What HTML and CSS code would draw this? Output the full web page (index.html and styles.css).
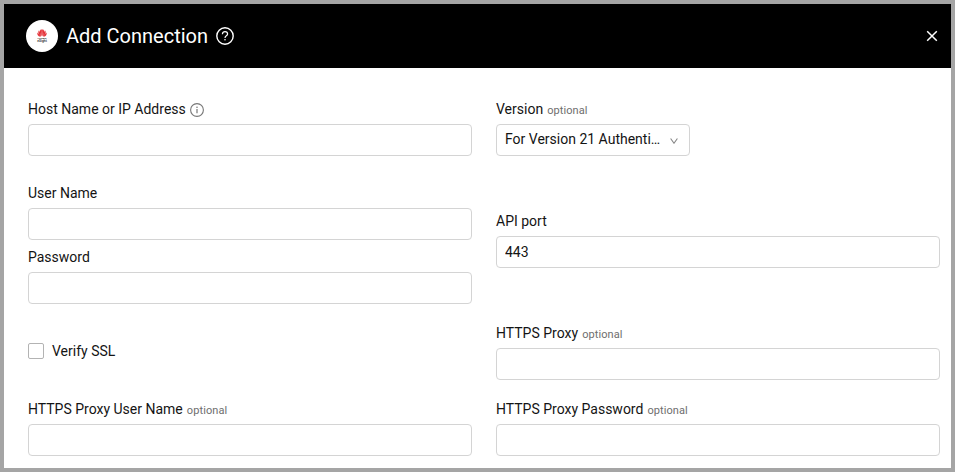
FILE: index.html
```html
<!DOCTYPE html>
<html lang="en">
<head>
<meta charset="utf-8">
<title>Add Connection</title>
<link rel="stylesheet" href="styles.css">
</head>
<body>
<main class="dialog">
  <header class="header">
    <span class="logo">
      <svg width="32" height="32" viewBox="0 0 32 32">
        <g fill="#e5333a">
          <path d="M15.7 16.2C13.6 14 13.4 10.2 15 9.6L15.9 9.5Z"/>
          <path d="M16.3 16.2C18.4 14 18.6 10.2 17 9.6L16.1 9.5Z"/>
          <path d="M15.2 16.3C12.4 15 11.6 12 13 10.3C14 12.3 14.9 14.6 15.2 16.3Z"/>
          <path d="M16.8 16.3C19.6 15 20.4 12 19 10.3C18 12.3 17.1 14.6 16.8 16.3Z"/>
          <path d="M14.8 16.6C12.2 16.9 10.9 14.8 11.4 12.6C12.8 13.8 14 15.2 14.8 16.6Z"/>
          <path d="M17.2 16.6C19.8 16.9 21.1 14.8 20.6 12.6C19.2 13.8 18 15.2 17.2 16.6Z"/>
        </g>
        <text class="logo-name" x="16" y="18.6" text-anchor="middle">HUAWEI</text>
        <text class="logo-sub" x="16" y="22.4" text-anchor="middle">eSight</text>
      </svg>
    </span>
    <h1 class="title">Add Connection</h1>
    <svg class="help" width="18" height="18" viewBox="0 0 18 18" fill="none" stroke="#fff">
      <circle cx="9" cy="9" r="8.2" stroke-width="1.4"/>
      <path d="M6.4 7.2C6.4 5.5 7.5 4.7 9 4.7S11.6 5.6 11.6 7.1C11.6 8.9 9 8.7 9 10.9" stroke-width="1.2"/>
      <circle cx="9" cy="12.8" r=".8" fill="#fff" stroke="none"/>
    </svg>
    <svg class="close" width="12" height="12" viewBox="0 0 12 12" fill="none" stroke="#fff" stroke-width="1.5">
      <path d="M1.2 1.2L10.8 10.8M10.8 1.2L1.2 10.8"/>
    </svg>
  </header>
  <form class="form">
    <div class="column">
      <div class="field gap-large">
        <label class="label" for="host">Host Name or IP Address
          <svg class="info" width="14" height="14" viewBox="0 0 14 14" fill="none" stroke="#777">
            <circle cx="7" cy="7" r="6.4" stroke-width="1.1"/>
            <path d="M7 6V10.3" stroke-width="1.2"/>
            <circle cx="7" cy="4.2" r=".8" fill="#777" stroke="none"/>
          </svg>
        </label>
        <input class="input" id="host">
      </div>
      <div class="field gap-small">
        <label class="label" for="user">User Name</label>
        <input class="input" id="user">
      </div>
      <div class="field">
        <label class="label" for="password">Password</label>
        <input class="input" id="password" type="password">
      </div>
      <label class="check"><input class="box" type="checkbox">Verify SSL</label>
      <div class="field">
        <label class="label" for="proxy-user">HTTPS Proxy User Name <span class="optional">optional</span></label>
        <input class="input" id="proxy-user">
      </div>
    </div>
    <div class="column">
      <div class="field gap-wide">
        <span class="label">Version <span class="optional">optional</span></span>
        <div class="input select">
          <span class="select-value">For Version 21 Authentication</span>
          <svg class="chevron" width="8" height="6" viewBox="0 0 8 6" fill="none" stroke="#858585" stroke-width="1.1"><path d="M.6 .5L4 5.2L7.4 .5"/></svg>
        </div>
      </div>
      <div class="field gap-wide">
        <label class="label" for="port">API port</label>
        <input class="input" id="port" value="443">
      </div>
      <div class="field gap-medium">
        <label class="label" for="proxy">HTTPS Proxy <span class="optional">optional</span></label>
        <input class="input" id="proxy">
      </div>
      <div class="field">
        <label class="label" for="proxy-password">HTTPS Proxy Password <span class="optional">optional</span></label>
        <input class="input" id="proxy-password" type="password">
      </div>
    </div>
  </form>
</main>
</body>
</html>
```
FILE: styles.css
```css
* { box-sizing: border-box; }
body {
  margin: 0;
  font: 14px/22px Roboto, sans-serif;
  color: #141414;
}
.dialog {
  height: 472px;
  border: 4px solid #a5a5a5;
  background: #fff;
  overflow: hidden;
}
.header {
  display: flex;
  align-items: center;
  height: 64px;
  padding: 0 13px 0 22px;
  background: #000;
  color: #fff;
}
.logo {
  width: 32px;
  height: 32px;
  border-radius: 50%;
  background: #fff;
}
.logo svg { display: block; }
.logo-name { font: bold 2.4px Roboto, sans-serif; fill: #222; }
.logo-sub { font: bold 3.3px Roboto, sans-serif; fill: #444; }
.title {
  margin: 0 8px;
  font-size: 20px;
  line-height: 28px;
  font-weight: 400;
}
.close { margin-left: auto; }
.form {
  display: grid;
  grid-template-columns: 444px 444px;
  column-gap: 24px;
  padding: 30px 0 0 24px;
}
.column { display: flex; flex-direction: column; }
.field { display: flex; flex-direction: column; gap: 4px; }
.gap-small { margin-bottom: 6px; }
.gap-medium { margin-bottom: 18px; }
.gap-large { margin-bottom: 26px; }
.gap-wide { margin-bottom: 54px; }
.label { height: 22px; white-space: nowrap; }
.info { margin-left: 1px; vertical-align: -3px; }
.optional {
  margin-left: .6px;
  font-size: 11px;
  letter-spacing: .08px;
  color: #6e6e6e;
}
.input {
  width: 100%;
  height: 32px;
  padding: 0 8px;
  border: 1px solid #d4d4d4;
  border-radius: 4px;
  background: #fff;
  color: inherit;
  font: inherit;
  outline: none;
}
.select {
  display: flex;
  align-items: center;
  justify-content: space-between;
  width: 194px;
  padding: 0 11px 2px 8px;
}
.select-value {
  width: 157px;
  overflow: hidden;
  white-space: nowrap;
  text-overflow: ellipsis;
}
.chevron { margin-top: 3px; }
.check {
  display: flex;
  align-items: center;
  gap: 8px;
  margin: 36px 0;
}
.box {
  appearance: none;
  width: 16px;
  height: 16px;
  margin: 0;
  border: 1px solid #b3b3b3;
  border-radius: 2px;
}
```
